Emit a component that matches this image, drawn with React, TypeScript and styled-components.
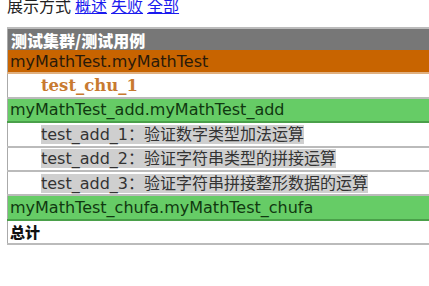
import React from "react";
import styled, { createGlobalStyle } from "styled-components";

const GlobalStyle = createGlobalStyle`
  body {
    margin: 0;
    background: #fff;
    font-family: "DejaVu Sans", "Noto Sans CJK SC", sans-serif;
    overflow: hidden;
  }
`;

const Page = styled.div`
  padding: 0 0 0 7px;
  margin-top: -5px;
`;

const ShowBar = styled.p`
  margin: 0 0 12px;
  font-size: 16px;
  line-height: 20px;
  color: #222;
  font-family: "Noto Sans CJK SC", sans-serif;
  a {
    color: #1a1aee;
    text-decoration: underline;
    margin-left: 4px;
  }
`;

const Table = styled.table`
  border-collapse: collapse;
  width: 460px;
  border: 1px solid #aaa;
`;

const HeadCell = styled.th`
  background: #777;
  color: #fff;
  text-align: left;
  font-size: 16px;
  line-height: 18px;
  font-weight: 900;
  height: 21px;
  padding: 0 3px;
  border-top: 2px solid #bbb;
  font-family: "Noto Sans CJK SC", sans-serif;
`;

type Kind = "fail" | "pass" | "plain";

const Row = styled.tr<{ $kind: Kind }>`
  background: ${(p) =>
    p.$kind === "fail" ? "#c86400" : p.$kind === "pass" ? "#66cc66" : "#fff"};
  color: ${(p) => (p.$kind === "pass" ? "#103810" : "#2a1a0a")};
  border-bottom: 2px solid
    ${(p) => (p.$kind === "pass" ? "#4aa04a" : p.$kind === "fail" ? "#e0b080" : "#bbb")};
`;

const Cell = styled.td<{ $indent?: number }>`
  height: 22.4px;
  padding: 0 0 0 ${(p) => p.$indent ?? 2}px;
  font-size: 16px;
  line-height: 19px;
  white-space: nowrap;
`;

const CaseName = styled.span<{ $failed?: boolean }>`
  color: ${(p) => (p.$failed ? "#c87a30" : "#333")};
  font-weight: ${(p) => (p.$failed ? "bold" : "normal")};
  font-family: ${(p) =>
    p.$failed ? '"DejaVu Serif", serif' : '"DejaVu Sans", "Noto Sans CJK SC", sans-serif'};
  font-size: ${(p) => (p.$failed ? "16.5px" : "16px")};
  background: ${(p) => (p.$failed ? "transparent" : "#cfcfcf")};
`;

const Total = styled.td`
  height: 22.4px;
  padding: 0 2px;
  font-size: 15px;
  line-height: 18px;
  font-weight: 900;
  color: #111;
  font-family: "Noto Sans CJK SC", sans-serif;
`;

const addCases = [
  "test_add_1：验证数字类型加法运算",
  "test_add_2：验证字符串类型的拼接运算",
  "test_add_3：验证字符串拼接整形数据的运算",
];

export default function App() {
  return (
    <Page>
      <GlobalStyle />
      <ShowBar>
        展示方式
        <a href="#">概述</a>
        <a href="#">失败</a>
        <a href="#">全部</a>
      </ShowBar>
      <Table>
        <thead>
          <tr>
            <HeadCell>测试集群/测试用例</HeadCell>
          </tr>
        </thead>
        <tbody>
          <Row $kind="fail">
            <Cell>myMathTest.myMathTest</Cell>
          </Row>
          <Row $kind="plain">
            <Cell $indent={33}>
              <CaseName $failed>test_chu_1</CaseName>
            </Cell>
          </Row>
          <Row $kind="pass">
            <Cell>myMathTest_add.myMathTest_add</Cell>
          </Row>
          {addCases.map((c) => (
            <Row $kind="plain" key={c}>
              <Cell $indent={33}>
                <CaseName>{c}</CaseName>
              </Cell>
            </Row>
          ))}
          <Row $kind="pass">
            <Cell>myMathTest_chufa.myMathTest_chufa</Cell>
          </Row>
          <Row $kind="plain">
            <Total>总计</Total>
          </Row>
        </tbody>
      </Table>
    </Page>
  );
}
